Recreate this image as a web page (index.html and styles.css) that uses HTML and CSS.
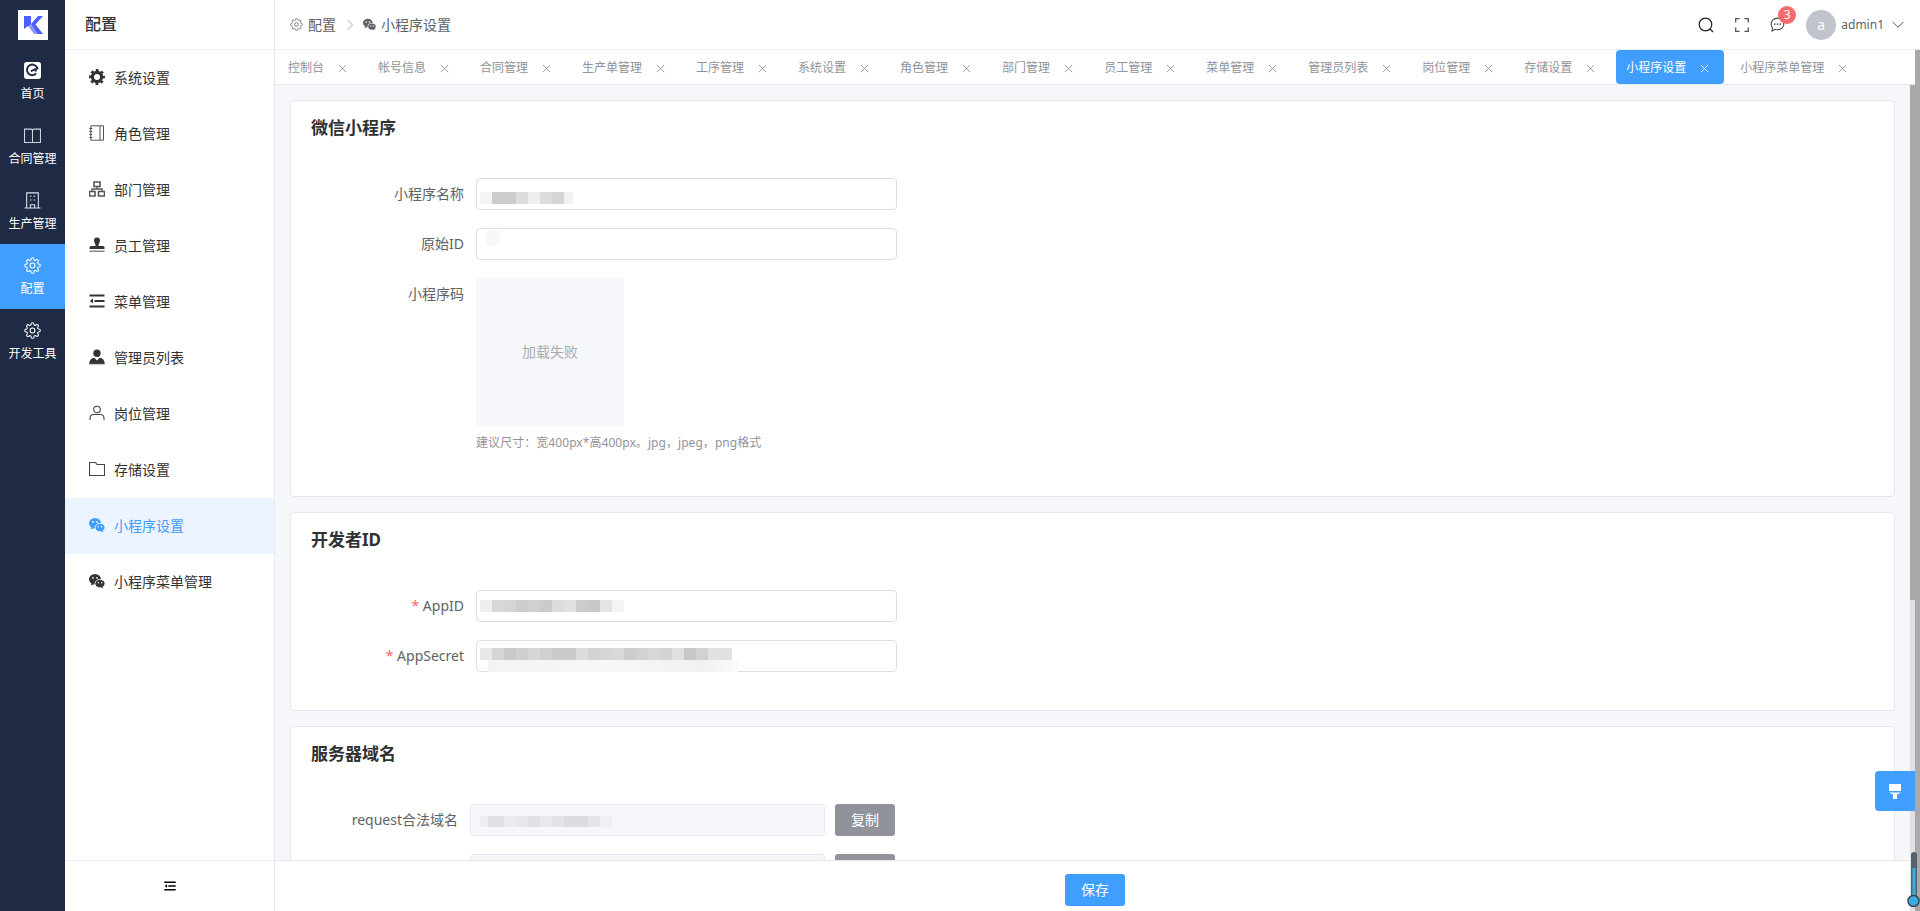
FILE: index.html
```html
<!DOCTYPE html>
<html lang="zh-CN">
<head>
<meta charset="utf-8">
<title>小程序设置</title>
<link rel="stylesheet" href="styles.css">
</head>
<body>
<svg class="defs" width="0" height="0" aria-hidden="true">
  <defs>
    <symbol id="gear" viewBox="0 0 24 24">
      <circle cx="12" cy="12" r="3.4" fill="none" stroke="currentColor" stroke-width="1.5"/>
      <path fill="none" stroke="currentColor" stroke-width="1.5" d="M19.4 15a1.65 1.65 0 0 0 .33 1.82l.06.06a2 2 0 0 1 0 2.83 2 2 0 0 1-2.83 0l-.06-.06a1.65 1.65 0 0 0-1.82-.33 1.65 1.65 0 0 0-1 1.51V21a2 2 0 0 1-2 2 2 2 0 0 1-2-2v-.09A1.65 1.65 0 0 0 9 19.4a1.65 1.65 0 0 0-1.82.33l-.06.06a2 2 0 0 1-2.83 0 2 2 0 0 1 0-2.83l.06-.06a1.65 1.65 0 0 0 .33-1.82 1.65 1.65 0 0 0-1.51-1H3a2 2 0 0 1-2-2 2 2 0 0 1 2-2h.09A1.65 1.65 0 0 0 4.6 9a1.65 1.65 0 0 0-.33-1.82l-.06-.06a2 2 0 0 1 0-2.83 2 2 0 0 1 2.83 0l.06.06a1.65 1.65 0 0 0 1.82.33H9a1.65 1.65 0 0 0 1-1.51V3a2 2 0 0 1 2-2 2 2 0 0 1 2 2v.09a1.65 1.65 0 0 0 1 1.51 1.65 1.65 0 0 0 1.82-.33l.06-.06a2 2 0 0 1 2.83 0 2 2 0 0 1 0 2.83l-.06.06a1.65 1.65 0 0 0-.33 1.82V9a1.65 1.65 0 0 0 1.51 1H21a2 2 0 0 1 2 2 2 2 0 0 1-2 2h-.09a1.65 1.65 0 0 0-1.51 1z"/>
    </symbol>
    <symbol id="wechat" viewBox="0 0 16 16">
      <ellipse cx="6" cy="6.2" rx="6" ry="5.2" fill="currentColor"/>
      <path d="M2.5 10l-.6 2.6 3-1.6z" fill="currentColor"/>
      <circle cx="4" cy="4.8" r=".9" fill="#fff"/>
      <circle cx="8" cy="4.8" r=".9" fill="#fff"/>
      <ellipse cx="11" cy="10.6" rx="5" ry="4.2" fill="currentColor" stroke="#fff" stroke-width=".8"/>
      <path d="M13.4 13.5l1 2-2.6-1.2z" fill="currentColor"/>
      <circle cx="9.4" cy="9.8" r=".75" fill="#fff"/>
      <circle cx="12.6" cy="9.8" r=".75" fill="#fff"/>
    </symbol>
    <symbol id="close" viewBox="0 0 10 10">
      <path d="M1 1l8 8M9 1L1 9" fill="none" stroke="currentColor" stroke-width="1"/>
    </symbol>
    <symbol id="indent" viewBox="0 0 14 12">
      <path d="M0 .5h14v2H0zM5 5h9v2H5zM0 9.500h14v2H0zM3.500 3.800v4.400L.5 6z" fill="currentColor"/>
    </symbol>
  </defs>
</svg>

<div class="app">
  <nav class="rail">
    <div class="logo">
      <svg width="20" height="20" viewBox="0 0 20 20"><path d="M1 1h7v8l7-8h5l-7.500 8.500L20 19h-6l-5-6 1-1-2-2.500L5 12v-1L1 14z" fill="#4d5dff"/><path d="M6 12l2.500-2.500L15 19H11z" fill="#8a96ff"/></svg>
    </div>
    <a class="rail-item">
      <svg class="rail-icon" viewBox="0 0 16 16"><rect width="16" height="16" rx="2.500" fill="#fff"/><path d="M11.500 10.800A5 5 0 1 1 12.600 6L6.500 8.500" fill="none" stroke="#1f2a44" stroke-width="1.800"/><circle cx="11" cy="8.200" r="1" fill="#1f2a44"/></svg>
      <span>首页</span>
    </a>
    <a class="rail-item">
      <svg class="rail-icon" viewBox="0 0 16 16"><path d="M.5 2h6c1 0 1.500.4 1.500 1.200C8 2.400 8.500 2 9.500 2h6v12.500h-6c-1 0-1.500.2-1.500.5 0-.3-.5-.5-1.500-.5h-6zM8 3v12" fill="none" stroke="#cfd3dc" stroke-width="1"/></svg>
      <span>合同管理</span>
    </a>
    <a class="rail-item">
      <svg class="rail-icon" viewBox="0 0 16 16"><path d="M2.500 15V.800h11V15M.5 15h15M6 15v-3h4v3M5.500 4h1.500M9 4h1.500M5.500 7.500h1.500M9 7.500h1.500" fill="none" stroke="#dfe2e8" stroke-width="1"/></svg>
      <span>生产管理</span>
    </a>
    <a class="rail-item active">
      <svg class="rail-icon" viewBox="0 0 24 24"><use href="#gear"/></svg>
      <span>配置</span>
    </a>
    <a class="rail-item">
      <svg class="rail-icon" viewBox="0 0 24 24"><use href="#gear"/></svg>
      <span>开发工具</span>
    </a>
  </nav>

  <aside class="side">
    <div class="side-head">配置</div>
    <ul class="menu">
      <li class="menu-item">
        <svg class="menu-icon" viewBox="0 0 16 16"><circle cx="8" cy="8" r="4.600" fill="none" stroke="currentColor" stroke-width="3.200"/><circle cx="8" cy="8" r="6.900" fill="none" stroke="currentColor" stroke-width="2.200" stroke-dasharray="2.800 2.620" stroke-dashoffset="1.400"/></svg>
        <span>系统设置</span>
      </li>
      <li class="menu-item">
        <svg class="menu-icon" viewBox="0 0 16 16"><path d="M1.800 .8h12.700v14.400H1.800zM11 .8v14.400M.3 3.500h3M.3 6.500h3M.3 9.500h3M.3 12.500h3" fill="none" stroke="#555" stroke-width="1"/></svg>
        <span>角色管理</span>
      </li>
      <li class="menu-item">
        <svg class="menu-icon" viewBox="0 0 16 16"><path d="M5 1h6v4.500H5zM.5 10.500h5.500V15H.5zM9.500 10.500H15.500V15H9.500z" fill="none" stroke="#555" stroke-width="1.600"/><path d="M8 5.500V8M3 10.500V8h10v2.500" fill="none" stroke="#555" stroke-width="1.300"/></svg>
        <span>部门管理</span>
      </li>
      <li class="menu-item">
        <svg class="menu-icon" viewBox="0 0 16 16"><path d="M8 .5a3 3 0 0 1 3 3c0 2-1.500 3-1.500 5.500h4.500a1.500 1.500 0 0 1 1.500 1.500V12H.5v-1.500A1.500 1.500 0 0 1 2 9h4.500C6.500 6.500 5 5.500 5 3.500a3 3 0 0 1 3-3z" fill="#333"/><path d="M.5 13.500h15V15H.5z" fill="#888"/></svg>
        <span>员工管理</span>
      </li>
      <li class="menu-item">
        <svg class="menu-icon" viewBox="0 0 16 16"><path d="M.5 1.500h15v2H.5zM5.500 7h10v2h-10zM.5 12.500h15v2H.5zM4 5.500v5L.8 8z" fill="#333"/></svg>
        <span>菜单管理</span>
      </li>
      <li class="menu-item">
        <svg class="menu-icon" viewBox="0 0 16 16"><circle cx="8" cy="4.200" r="3.700" fill="#333"/><path d="M.3 15c0-3.800 2.200-6 5-6.200L8 11.500l2.700-2.700c2.800.2 5 2.400 5 6.200z" fill="#333"/><path d="M0 15.300h16" stroke="#aaa" stroke-width=".8"/></svg>
        <span>管理员列表</span>
      </li>
      <li class="menu-item">
        <svg class="menu-icon" viewBox="0 0 16 16"><circle cx="8" cy="4.500" r="3.300" fill="none" stroke="#444" stroke-width="1.100"/><path d="M1 15v-1.800C1 10.500 3 9.500 5 9.500h6c2 0 4 1 4 3.700V15" fill="none" stroke="#444" stroke-width="1.100"/></svg>
        <span>岗位管理</span>
      </li>
      <li class="menu-item">
        <svg class="menu-icon" viewBox="0 0 16 16"><path d="M.5 1.500h6l1.500 2h7.500v11H.5z" fill="none" stroke="#444" stroke-width="1.100"/></svg>
        <span>存储设置</span>
      </li>
      <li class="menu-item current">
        <svg class="menu-icon" viewBox="0 0 16 16"><use href="#wechat"/></svg>
        <span>小程序设置</span>
      </li>
      <li class="menu-item">
        <svg class="menu-icon" viewBox="0 0 16 16"><use href="#wechat"/></svg>
        <span>小程序菜单管理</span>
      </li>
    </ul>
    <div class="side-foot">
      <svg class="side-toggle" viewBox="0 0 14 12"><use href="#indent"/></svg>
    </div>
  </aside>

  <main class="main">
    <header class="top">
      <div class="crumbs">
        <svg class="crumb-icon" viewBox="0 0 24 24"><use href="#gear"/></svg>
        <span class="crumb-text">配置</span>
        <svg class="crumb-sep" viewBox="0 0 8 12"><path d="M1.500 1l5 5-5 5" fill="none" stroke="#a8abb2" stroke-width="1"/></svg>
        <svg class="crumb-icon" viewBox="0 0 16 16"><use href="#wechat"/></svg>
        <span class="crumb-text">小程序设置</span>
      </div>
      <div class="tools">
        <svg class="tool tool-search" viewBox="0 0 16 16"><circle cx="7.500" cy="7.500" r="6.300" fill="none" stroke="#222" stroke-width="1.200"/><path d="M12 12l3 3" stroke="#222" stroke-width="1.200"/></svg>
        <svg class="tool tool-full" viewBox="0 0 14 14"><path d="M.7 4.500V.7h3.800M9.500.7h3.800v3.800M13.300 9.500v3.800H9.500M4.500 13.300H.7V9.500" fill="none" stroke="#555" stroke-width="1.300"/></svg>
        <div class="chat">
          <svg class="tool tool-chat" viewBox="0 0 16 16"><path d="M8 1.200c3.800 0 6.800 2.700 6.800 6.200s-3 6.200-6.800 6.200c-.9 0-1.700-.1-2.500-.4L2.200 15l.5-3.300C1.800 10.600 1.200 9 1.200 7.400 1.200 3.900 4.200 1.200 8 1.200z" fill="none" stroke="#444" stroke-width="1.100"/><circle cx="5" cy="7.500" r=".9" fill="#444"/><circle cx="8" cy="7.500" r=".9" fill="#444"/><circle cx="11" cy="7.500" r=".9" fill="#444"/></svg>
          <span class="badge">3</span>
        </div>
        <div class="avatar">a</div>
        <span class="user">admin1</span>
        <svg class="caret" viewBox="0 0 12 8"><path d="M.7 1l5.300 5.300L11.300 1" fill="none" stroke="#555" stroke-width="1"/></svg>
      </div>
    </header>

    <div class="below">
      <div class="work">
        <div class="tabs">
          <div class="tab"><span>控制台</span><svg class="tab-x" viewBox="0 0 10 10"><use href="#close"/></svg></div>
          <div class="tab"><span>帐号信息</span><svg class="tab-x" viewBox="0 0 10 10"><use href="#close"/></svg></div>
          <div class="tab"><span>合同管理</span><svg class="tab-x" viewBox="0 0 10 10"><use href="#close"/></svg></div>
          <div class="tab"><span>生产单管理</span><svg class="tab-x" viewBox="0 0 10 10"><use href="#close"/></svg></div>
          <div class="tab"><span>工序管理</span><svg class="tab-x" viewBox="0 0 10 10"><use href="#close"/></svg></div>
          <div class="tab"><span>系统设置</span><svg class="tab-x" viewBox="0 0 10 10"><use href="#close"/></svg></div>
          <div class="tab"><span>角色管理</span><svg class="tab-x" viewBox="0 0 10 10"><use href="#close"/></svg></div>
          <div class="tab"><span>部门管理</span><svg class="tab-x" viewBox="0 0 10 10"><use href="#close"/></svg></div>
          <div class="tab"><span>员工管理</span><svg class="tab-x" viewBox="0 0 10 10"><use href="#close"/></svg></div>
          <div class="tab"><span>菜单管理</span><svg class="tab-x" viewBox="0 0 10 10"><use href="#close"/></svg></div>
          <div class="tab"><span>管理员列表</span><svg class="tab-x" viewBox="0 0 10 10"><use href="#close"/></svg></div>
          <div class="tab"><span>岗位管理</span><svg class="tab-x" viewBox="0 0 10 10"><use href="#close"/></svg></div>
          <div class="tab"><span>存储设置</span><svg class="tab-x" viewBox="0 0 10 10"><use href="#close"/></svg></div>
          <div class="tab tab-on"><span>小程序设置</span><svg class="tab-x" viewBox="0 0 10 10"><use href="#close"/></svg></div>
          <div class="tab"><span>小程序菜单管理</span><svg class="tab-x" viewBox="0 0 10 10"><use href="#close"/></svg></div>
        </div>

        <div class="pane">
          <div class="pane-main">
            <div class="scroll">
              <section class="card card-wx">
                <h2 class="card-title">微信小程序</h2>
                <div class="row">
                  <label class="label">小程序名称</label>
                  <div class="input"><span class="mosaic m-name"></span></div>
                </div>
                <div class="row">
                  <label class="label">原始ID</label>
                  <div class="input"><span class="mosaic m-raw"></span></div>
                </div>
                <div class="row row-top">
                  <label class="label">小程序码</label>
                  <div class="field">
                    <div class="qr">加载失败</div>
                    <p class="hint">建议尺寸：宽400px*高400px。jpg，jpeg，png格式</p>
                  </div>
                </div>
              </section>

              <section class="card card-dev">
                <h2 class="card-title">开发者ID</h2>
                <div class="row">
                  <label class="label"><em class="req">*</em> AppID</label>
                  <div class="input"><span class="mosaic m-appid"></span></div>
                </div>
                <div class="row">
                  <label class="label"><em class="req">*</em> AppSecret</label>
                  <div class="input"><span class="mosaic m-secret"></span></div>
                </div>
              </section>

              <section class="card">
                <h2 class="card-title">服务器域名</h2>
                <div class="row row-domain">
                  <label class="label">request合法域名</label>
                  <div class="input input-off"><span class="mosaic m-req"></span></div>
                  <button class="btn btn-gray">复制</button>
                </div>
                <div class="row row-domain">
                  <div class="label"></div>
                  <div class="input input-off"></div>
                  <div class="btn btn-gray"></div>
                </div>
              </section>
            </div>
            <footer class="foot"><button class="btn btn-blue">保存</button></footer>
          </div>
          <div class="track"><div class="thumb"></div></div>
        </div>
      </div>
      <div class="strip"></div>
    </div>
  </main>
</div>

<button class="float-btn" aria-label="主题">
  <svg width="12" height="15" viewBox="0 0 12 15"><path d="M0 0h12v7H0zM0 8.500h12L8 10.500V15H4v-4.500z" fill="#fff"/></svg>
</button>
<svg class="thermo" width="14" height="58" viewBox="0 0 14 58"><rect x="4" y="1" width="6" height="48" rx="3" fill="#55636f"/><rect x="5.500" y="17" width="3" height="32" fill="#3aaee0"/><circle cx="6.500" cy="50" r="5.500" fill="#3aaee0" stroke="#37474f" stroke-width="1.500"/></svg>
</body>
</html>
```
FILE: styles.css
```css
* { box-sizing: border-box; }
html, body { margin: 0; height: 100%; overflow: hidden; }
body {
  font-family: "Noto Sans", "Noto Sans CJK SC", sans-serif;
  font-size: 14px;
  color: #303133;
  background: #fff;
}
.defs { display: block; height: 0; }
.app { display: flex; height: 911px; }

/* rail */
.rail { width: 65px; flex: none; background: #1f2a44; display: flex; flex-direction: column; }
.logo { height: 49px; padding-top: 10px; display: flex; justify-content: center; }
.logo svg { width: 30px; height: 30px; padding: 5px; background: #fff; }
.rail-item {
  height: 65px; display: flex; flex-direction: column; align-items: center;
  padding-top: 13px; gap: 6px;
  color: #fff; font-size: 12px; line-height: 18px; white-space: nowrap;
}
.rail-item.active { background: #409eff; }
.rail-icon { width: 17px; height: 17px; color: #fff; display: block; }

/* sidebar */
.side { width: 210px; flex: none; display: flex; flex-direction: column; background: #fff; border-right: 1px solid #e4e7ed; }
.side-head { height: 50px; padding-left: 20px; border-bottom: 1px solid #ebeef5; font-size: 16px; font-weight: 500; line-height: 49px; }
.menu { list-style: none; margin: 0; padding: 0; flex: 1; }
.menu-item { height: 56px; display: flex; align-items: center; padding: 0 0 2px 24px; gap: 9px; font-size: 14px; color: #303133; }
.menu-icon { width: 16px; height: 16px; flex: none; color: #333; }
.menu-item.current { background: #ecf5ff; color: #409eff; }
.menu-item.current .menu-icon { color: #409eff; }
.side-foot { height: 51px; border-top: 1px solid #ebeef5; display: flex; align-items: center; justify-content: center; color: #000; }
.side-toggle { width: 12px; height: 10px; color: #000; }

/* main */
.main { flex: 1; min-width: 0; display: flex; flex-direction: column; }
.top { height: 50px; flex: none; border-bottom: 1px solid #ebeef5; display: flex; align-items: center; justify-content: space-between; padding: 0 16px 0 15px; background: #fff; }
.crumbs { display: flex; align-items: center; color: #606266; font-size: 14px; line-height: 20px; }
.crumb-icon { width: 13px; height: 13px; color: #606266; margin-right: 5px; }
.crumb-text { color: #606266; }
.crumb-sep { width: 8px; height: 12px; margin: 0 9px 0 10px; }
.tools { display: flex; align-items: center; }
.tool { display: block; }
.tool-search { width: 16px; height: 16px; margin-right: 21px; }
.tool-full { width: 14px; height: 14px; margin-right: 21px; }
.chat { position: relative; width: 16px; height: 16px; margin-right: 20px; }
.tool-chat { width: 15px; height: 15px; }
.badge {
  position: absolute; left: 8px; top: -11px; width: 18px; height: 18px; border-radius: 50%;
  background: #f56c6c; color: #fff; font-size: 12px; line-height: 18px; text-align: center;
}
.avatar { width: 30px; height: 30px; border-radius: 50%; background: #c0c4cc; color: #fff; font-size: 14px; line-height: 30px; text-align: center; margin-right: 5px; }
.user { font-size: 12px; color: #606266; margin-right: 8px; }
.caret { width: 12px; height: 8px; }

.below { flex: 1; min-height: 0; display: flex; }
.work { flex: 1; min-width: 0; display: flex; flex-direction: column; }
.strip { width: 5px; flex: none; background: #a9a9a9; }
.tabs { height: 35px; flex: none; padding-left: 3px; display: flex; gap: 6px; border-bottom: 1px solid #e4e7ed; background: #fff; }
.tab { height: 34px; display: flex; align-items: center; padding: 2px 0 0 10px; font-size: 12px; line-height: 18px; color: #909399; border-radius: 4px; white-space: nowrap; }
.tab-x { width: 9px; height: 9px; margin: 0 15px 0 14px; color: #909399; flex: none; }
.tab-on { background: #409eff; color: #fff; }
.tab-on .tab-x { color: #fff; }

.pane { flex: 1; min-height: 0; display: flex; }
.pane-main { flex: 1; min-width: 0; display: flex; flex-direction: column; }
.track { width: 5px; flex: none; background: #e0e0e3; }
.thumb { height: 515px; background: #a9a9a9; }
.scroll { flex: 1; min-height: 0; overflow: hidden; background: #f5f7fa; padding: 15px 15px 0; }
.card { background: #fff; border: 1px solid #e4e7ed; border-radius: 4px; padding: 15px 20px 19px; margin-bottom: 15px; }
.card-wx { height: 397px; }
.card-dev { height: 199px; }
.card-title { margin: 0 0 38px; font-size: 17px; font-weight: 700; line-height: 24px; color: #303133; }
.row { display: flex; align-items: center; margin-bottom: 18px; }
.row-top { align-items: flex-start; margin-bottom: 0; }
.label { width: 153px; flex: none; margin-right: 12px; text-align: right; color: #606266; font-size: 14px; line-height: 32px; white-space: nowrap; }
.req { color: #f56c6c; font-style: normal; }
.input { width: 421px; height: 32px; border: 1px solid #dcdfe6; border-radius: 4px; background: #fff; padding-left: 3px; position: relative; }
.input-off { width: 355px; background: #f5f7fa; border-color: #e4e7ed; }
.row-domain .label { width: 147px; height: 32px; }
.field { width: 421px; }
.qr { width: 148px; height: 148px; padding-bottom: 2px; background: #f5f7fa; color: #a8abb2; display: flex; align-items: center; justify-content: center; font-size: 14px; }
.hint { margin: 8px 0 0; font-size: 12px; line-height: 18px; color: #909399; letter-spacing: .06px; }

.mosaic { display: block; position: absolute; left: 3px; }
.m-name {
  top: 6px; width: 93px; height: 25px;
  background:
    linear-gradient(90deg, #f4f4f4 0 12px, #ccc 12px 36px, #ddd 36px 48px, #eee 48px 60px, #ddd 60px 72px, #d5d5d5 72px 84px, #f2f2f2 84px 93px) 0 7px / 93px 12px no-repeat;
}
.m-raw { top: 0; left: 8px; width: 15px; height: 18px; border-radius: 50%; background: #f8f8f8; }
.m-appid {
  top: 9px; width: 144px; height: 12px;
  background: linear-gradient(90deg, #eee 0 12px, #d8d8da 12px 24px, #d5d5d7 24px 36px, #cdcdcf 36px 48px, #d0d0d2 48px 60px, #cbcbcd 60px 72px, #dcdcde 72px 84px, #e0e0e2 84px 96px, #cccccf 96px 108px, #c8c8cb 108px 120px, #e4e4e4 120px 132px, #f4f4f4 132px 144px);
}
.m-secret {
  top: 7px; width: 266px; height: 24px;
  background:
    linear-gradient(90deg, #e8e8e8 0 12px, #d5d5d8 12px 24px, #c9c9cc 24px 36px, #cfcfd1 36px 48px, #d6d6d8 48px 60px, #d0d0d3 60px 72px, #cbcbce 72px 96px, #dcdcde 96px 108px, #d2d2d4 108px 120px, #d6d6d8 120px 132px, #d9d9db 132px 144px, #cdcdd0 144px 156px, #d2d2d4 156px 168px, #d8d8da 168px 180px, #d4d4d6 180px 192px, #dfe0e0 192px 204px, #c8c8cb 204px 216px, #d2d2d4 216px 228px, #e0e1e1 228px 252px) 0 0 / 252px 12px no-repeat,
    linear-gradient(90deg, #f3f3f4, #f7f7f7 50%, #f1f1f2 85%, #fafafa) 8px 12px / 250px 12px no-repeat;
}
.m-req {
  top: 11px; left: 9px; width: 132px; height: 11px;
  background: linear-gradient(90deg, #eeeff2 0 8px, #dfe0e4 8px 24px, #eaebee 24px 36px, #e6e7ea 36px 48px, #e0e1e5 48px 60px, #e8e9ec 60px 72px, #e2e3e7 72px 84px, #dcdde1 84px 108px, #e4e5e9 108px 120px, #eff0f3 120px 132px);
}

.btn { border: 0; height: 32px; width: 60px; padding: 0; border-radius: 3px; color: #fff; font: inherit; font-size: 14px; line-height: 32px; }
.btn-gray { background: #909399; margin-left: 10px; flex: none; }
.btn-blue { background: #409eff; }
.foot { height: 51px; flex: none; border-top: 1px solid #e4e7ed; background: #fff; display: flex; justify-content: center; padding: 13px 0 0 5px; }

.float-btn { position: absolute; left: 1875px; top: 771px; width: 40px; height: 40px; border: 0; padding: 0; background: #409eff; border-radius: 4px 0 0 4px; display: flex; align-items: center; justify-content: center; }
.thermo { position: absolute; left: 1907px; top: 851px; }
```
